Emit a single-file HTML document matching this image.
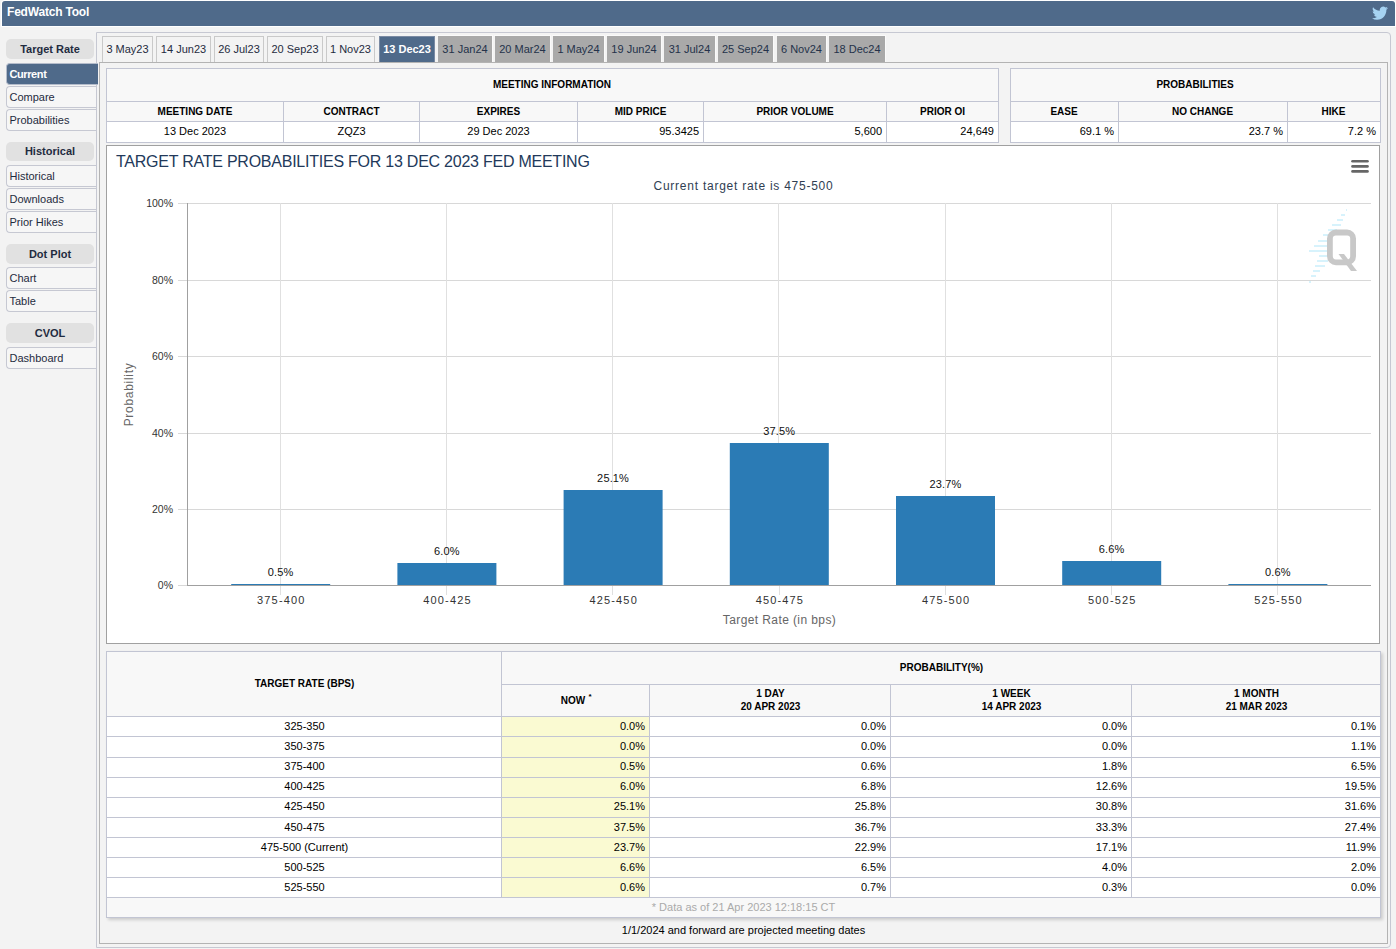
<!DOCTYPE html>
<html><head><meta charset="utf-8"><style>
html,body{margin:0;padding:0;}
body{width:1396px;height:949px;position:relative;overflow:hidden;background:#f3f3f3;font-family:"Liberation Sans", sans-serif;}
body>div,body>svg{position:absolute;box-sizing:content-box;}
svg text{font-family:"Liberation Sans", sans-serif;}
</style></head><body>
<div style="left:1px;top:0px;width:1395px;height:27px;background:#fff;border-radius:4px 4px 0 0;"></div>
<div style="left:2px;top:1px;width:1393px;height:25px;background:#4f6a8a;border-radius:3px 3px 0 0;"></div>
<div style="left:7px;top:5.84px;font-size:12px;line-height:12px;font-weight:bold;color:#fff;white-space:nowrap;letter-spacing:-0.2px;">FedWatch Tool</div>
<svg style="left:1372px;top:6px;width:16px;height:14px" viewBox="0 1.5 24 20.5" preserveAspectRatio="none"><path fill="#a6d3f2" d="M23.953 4.57a10 10 0 01-2.825.775 4.958 4.958 0 002.163-2.723c-.951.555-2.005.959-3.127 1.184a4.92 4.92 0 00-8.384 4.482C7.69 8.095 4.067 6.13 1.64 3.162a4.822 4.822 0 00-.666 2.475c0 1.71.87 3.213 2.188 4.096a4.904 4.904 0 01-2.228-.616v.06a4.923 4.923 0 003.946 4.827 4.996 4.996 0 01-2.212.085 4.936 4.936 0 004.604 3.417 9.867 9.867 0 01-6.102 2.105c-.39 0-.779-.023-1.17-.067a13.995 13.995 0 007.557 2.209c9.053 0 13.998-7.496 13.998-13.985 0-.21 0-.42-.015-.63A9.935 9.935 0 0024 4.59z"/></svg>
<div style="left:6px;top:39px;width:88px;height:20px;background:#e1e1e1;border-radius:5px;"></div>
<div style="left:6.0px;width:88px;text-align:center;top:43.69px;font-size:11px;line-height:11px;font-weight:bold;color:#1f2b40;white-space:nowrap;">Target Rate</div>
<div style="left:6px;top:63px;width:91px;height:20px;background:#4f6a8a;border:1px solid #b4bccb;border-right:none;border-radius:4px 0 0 4px;z-index:2;"></div>
<div style="left:9.5px;top:68.69px;font-size:11px;line-height:11px;font-weight:bold;color:#fff;white-space:nowrap;letter-spacing:-0.4px;z-index:3;">Current</div>
<div style="left:6px;top:86px;width:90px;height:20px;background:#f6f6f6;border:1px solid #c6c8d2;border-right:none;border-radius:4px 0 0 4px;"></div>
<div style="left:9.5px;top:91.69px;font-size:11px;line-height:11px;font-weight:normal;color:#1f2b40;white-space:nowrap;">Compare</div>
<div style="left:6px;top:109px;width:90px;height:20px;background:#f6f6f6;border:1px solid #c6c8d2;border-right:none;border-radius:4px 0 0 4px;"></div>
<div style="left:9.5px;top:114.69px;font-size:11px;line-height:11px;font-weight:normal;color:#1f2b40;white-space:nowrap;">Probabilities</div>
<div style="left:6px;top:142px;width:88px;height:19px;background:#e1e1e1;border-radius:5px;"></div>
<div style="left:6.0px;width:88px;text-align:center;top:145.69px;font-size:11px;line-height:11px;font-weight:bold;color:#1f2b40;white-space:nowrap;">Historical</div>
<div style="left:6px;top:165px;width:90px;height:20px;background:#f6f6f6;border:1px solid #c6c8d2;border-right:none;border-radius:4px 0 0 4px;"></div>
<div style="left:9.5px;top:170.69px;font-size:11px;line-height:11px;font-weight:normal;color:#1f2b40;white-space:nowrap;">Historical</div>
<div style="left:6px;top:188px;width:90px;height:20px;background:#f6f6f6;border:1px solid #c6c8d2;border-right:none;border-radius:4px 0 0 4px;"></div>
<div style="left:9.5px;top:193.69px;font-size:11px;line-height:11px;font-weight:normal;color:#1f2b40;white-space:nowrap;">Downloads</div>
<div style="left:6px;top:211px;width:90px;height:20px;background:#f6f6f6;border:1px solid #c6c8d2;border-right:none;border-radius:4px 0 0 4px;"></div>
<div style="left:9.5px;top:216.69px;font-size:11px;line-height:11px;font-weight:normal;color:#1f2b40;white-space:nowrap;">Prior Hikes</div>
<div style="left:6px;top:244px;width:88px;height:20px;background:#e1e1e1;border-radius:5px;"></div>
<div style="left:6.0px;width:88px;text-align:center;top:248.69px;font-size:11px;line-height:11px;font-weight:bold;color:#1f2b40;white-space:nowrap;">Dot Plot</div>
<div style="left:6px;top:267px;width:90px;height:20px;background:#f6f6f6;border:1px solid #c6c8d2;border-right:none;border-radius:4px 0 0 4px;"></div>
<div style="left:9.5px;top:272.69px;font-size:11px;line-height:11px;font-weight:normal;color:#1f2b40;white-space:nowrap;">Chart</div>
<div style="left:6px;top:290px;width:90px;height:20px;background:#f6f6f6;border:1px solid #c6c8d2;border-right:none;border-radius:4px 0 0 4px;"></div>
<div style="left:9.5px;top:295.69px;font-size:11px;line-height:11px;font-weight:normal;color:#1f2b40;white-space:nowrap;">Table</div>
<div style="left:6px;top:323px;width:88px;height:20px;background:#e1e1e1;border-radius:5px;"></div>
<div style="left:6.0px;width:88px;text-align:center;top:327.69px;font-size:11px;line-height:11px;font-weight:bold;color:#1f2b40;white-space:nowrap;">CVOL</div>
<div style="left:6px;top:347px;width:90px;height:20px;background:#f6f6f6;border:1px solid #c6c8d2;border-right:none;border-radius:4px 0 0 4px;"></div>
<div style="left:9.5px;top:352.69px;font-size:11px;line-height:11px;font-weight:normal;color:#1f2b40;white-space:nowrap;">Dashboard</div>
<div style="left:96px;top:32px;width:1293px;height:914px;background:#f3f3f3;border:1px solid #c6c8d2;border-radius:0 4px 4px 0;"></div>
<div style="left:102px;top:36px;width:49px;height:26px;background:#f3f3f3;border:1px solid #c9c9c9;border-bottom:none;"></div>
<div style="left:102.0px;width:51px;text-align:center;top:43.69px;font-size:11px;line-height:11px;font-weight:normal;color:#1f2b40;white-space:nowrap;">3 May23</div>
<div style="left:156px;top:36px;width:53px;height:26px;background:#f3f3f3;border:1px solid #c9c9c9;border-bottom:none;"></div>
<div style="left:156.0px;width:55px;text-align:center;top:43.69px;font-size:11px;line-height:11px;font-weight:normal;color:#1f2b40;white-space:nowrap;">14 Jun23</div>
<div style="left:214px;top:36px;width:48px;height:26px;background:#f3f3f3;border:1px solid #c9c9c9;border-bottom:none;"></div>
<div style="left:214.0px;width:50px;text-align:center;top:43.69px;font-size:11px;line-height:11px;font-weight:normal;color:#1f2b40;white-space:nowrap;">26 Jul23</div>
<div style="left:267px;top:36px;width:54px;height:26px;background:#f3f3f3;border:1px solid #c9c9c9;border-bottom:none;"></div>
<div style="left:267.0px;width:56px;text-align:center;top:43.69px;font-size:11px;line-height:11px;font-weight:normal;color:#1f2b40;white-space:nowrap;">20 Sep23</div>
<div style="left:326px;top:36px;width:47px;height:26px;background:#f3f3f3;border:1px solid #c9c9c9;border-bottom:none;"></div>
<div style="left:326.0px;width:49px;text-align:center;top:43.69px;font-size:11px;line-height:11px;font-weight:normal;color:#1f2b40;white-space:nowrap;">1 Nov23</div>
<div style="left:379px;top:36px;width:54px;height:25px;background:#4f6a8a;border:1px solid #7a8aa3;border-bottom:none;"></div>
<div style="left:379.0px;width:56px;text-align:center;top:43.69px;font-size:11px;line-height:11px;font-weight:bold;color:#fff;white-space:nowrap;">13 Dec23</div>
<div style="left:437px;top:35px;width:55px;height:1px;background:#fafafa;"></div>
<div style="left:492px;top:35px;width:1px;height:27px;background:#fafafa;"></div>
<div style="left:438px;top:36px;width:54px;height:26px;background:#a9a9a9;"></div>
<div style="left:438.0px;width:54px;text-align:center;top:43.69px;font-size:11px;line-height:11px;font-weight:normal;color:#24324a;white-space:nowrap;">31 Jan24</div>
<div style="left:494px;top:35px;width:56px;height:1px;background:#fafafa;"></div>
<div style="left:550px;top:35px;width:1px;height:27px;background:#fafafa;"></div>
<div style="left:495px;top:36px;width:55px;height:26px;background:#a9a9a9;"></div>
<div style="left:495.0px;width:55px;text-align:center;top:43.69px;font-size:11px;line-height:11px;font-weight:normal;color:#24324a;white-space:nowrap;">20 Mar24</div>
<div style="left:552px;top:35px;width:52px;height:1px;background:#fafafa;"></div>
<div style="left:604px;top:35px;width:1px;height:27px;background:#fafafa;"></div>
<div style="left:553px;top:36px;width:51px;height:26px;background:#a9a9a9;"></div>
<div style="left:553.0px;width:51px;text-align:center;top:43.69px;font-size:11px;line-height:11px;font-weight:normal;color:#24324a;white-space:nowrap;">1 May24</div>
<div style="left:606px;top:35px;width:55px;height:1px;background:#fafafa;"></div>
<div style="left:661px;top:35px;width:1px;height:27px;background:#fafafa;"></div>
<div style="left:607px;top:36px;width:54px;height:26px;background:#a9a9a9;"></div>
<div style="left:607.0px;width:54px;text-align:center;top:43.69px;font-size:11px;line-height:11px;font-weight:normal;color:#24324a;white-space:nowrap;">19 Jun24</div>
<div style="left:663px;top:35px;width:52px;height:1px;background:#fafafa;"></div>
<div style="left:715px;top:35px;width:1px;height:27px;background:#fafafa;"></div>
<div style="left:664px;top:36px;width:51px;height:26px;background:#a9a9a9;"></div>
<div style="left:664.0px;width:51px;text-align:center;top:43.69px;font-size:11px;line-height:11px;font-weight:normal;color:#24324a;white-space:nowrap;">31 Jul24</div>
<div style="left:717px;top:35px;width:56px;height:1px;background:#fafafa;"></div>
<div style="left:773px;top:35px;width:1px;height:27px;background:#fafafa;"></div>
<div style="left:718px;top:36px;width:55px;height:26px;background:#a9a9a9;"></div>
<div style="left:718.0px;width:55px;text-align:center;top:43.69px;font-size:11px;line-height:11px;font-weight:normal;color:#24324a;white-space:nowrap;">25 Sep24</div>
<div style="left:776px;top:35px;width:50px;height:1px;background:#fafafa;"></div>
<div style="left:826px;top:35px;width:1px;height:27px;background:#fafafa;"></div>
<div style="left:777px;top:36px;width:49px;height:26px;background:#a9a9a9;"></div>
<div style="left:777.0px;width:49px;text-align:center;top:43.69px;font-size:11px;line-height:11px;font-weight:normal;color:#24324a;white-space:nowrap;">6 Nov24</div>
<div style="left:828px;top:35px;width:57px;height:1px;background:#fafafa;"></div>
<div style="left:885px;top:35px;width:1px;height:27px;background:#fafafa;"></div>
<div style="left:829px;top:36px;width:56px;height:26px;background:#a9a9a9;"></div>
<div style="left:829.0px;width:56px;text-align:center;top:43.69px;font-size:11px;line-height:11px;font-weight:normal;color:#24324a;white-space:nowrap;">18 Dec24</div>
<div style="left:99px;top:62px;width:1287px;height:880px;background:#f3f3f3;border:1px solid #b3b3b3;"></div>
<div style="left:106px;top:68px;width:893px;height:75px;background:#f8f8f8;"></div>
<div style="left:106px;top:121px;width:893px;height:22px;background:#fff;"></div>
<div style="left:106px;top:68px;width:893px;height:1px;background:#c2c5d3;"></div>
<div style="left:106px;top:101px;width:893px;height:1px;background:#c2c5d3;"></div>
<div style="left:106px;top:121px;width:893px;height:1px;background:#c2c5d3;"></div>
<div style="left:106px;top:142px;width:893px;height:1px;background:#c2c5d3;"></div>
<div style="left:106px;top:68px;width:1px;height:75px;background:#c2c5d3;"></div>
<div style="left:998px;top:68px;width:1px;height:75px;background:#c2c5d3;"></div>
<div style="left:283px;top:101px;width:1px;height:42px;background:#c2c5d3;"></div>
<div style="left:419px;top:101px;width:1px;height:42px;background:#c2c5d3;"></div>
<div style="left:577px;top:101px;width:1px;height:42px;background:#c2c5d3;"></div>
<div style="left:703px;top:101px;width:1px;height:42px;background:#c2c5d3;"></div>
<div style="left:886px;top:101px;width:1px;height:42px;background:#c2c5d3;"></div>
<div style="left:352.0px;width:400px;text-align:center;top:79.53px;font-size:10px;line-height:10px;font-weight:bold;color:#000;white-space:nowrap;">MEETING INFORMATION</div>
<div style="left:45.0px;width:300px;text-align:center;top:106.53px;font-size:10px;line-height:10px;font-weight:bold;color:#000;white-space:nowrap;">MEETING DATE</div>
<div style="left:45.0px;width:300px;text-align:center;top:125.69px;font-size:11px;line-height:11px;font-weight:normal;color:#000;white-space:nowrap;">13 Dec 2023</div>
<div style="left:201.5px;width:300px;text-align:center;top:106.53px;font-size:10px;line-height:10px;font-weight:bold;color:#000;white-space:nowrap;">CONTRACT</div>
<div style="left:201.5px;width:300px;text-align:center;top:125.69px;font-size:11px;line-height:11px;font-weight:normal;color:#000;white-space:nowrap;">ZQZ3</div>
<div style="left:348.5px;width:300px;text-align:center;top:106.53px;font-size:10px;line-height:10px;font-weight:bold;color:#000;white-space:nowrap;">EXPIRES</div>
<div style="left:348.5px;width:300px;text-align:center;top:125.69px;font-size:11px;line-height:11px;font-weight:normal;color:#000;white-space:nowrap;">29 Dec 2023</div>
<div style="left:490.5px;width:300px;text-align:center;top:106.53px;font-size:10px;line-height:10px;font-weight:bold;color:#000;white-space:nowrap;">MID PRICE</div>
<div style="left:399px;width:300px;text-align:right;top:125.69px;font-size:11px;line-height:11px;font-weight:normal;color:#000;white-space:nowrap;">95.3425</div>
<div style="left:645.0px;width:300px;text-align:center;top:106.53px;font-size:10px;line-height:10px;font-weight:bold;color:#000;white-space:nowrap;">PRIOR VOLUME</div>
<div style="left:582px;width:300px;text-align:right;top:125.69px;font-size:11px;line-height:11px;font-weight:normal;color:#000;white-space:nowrap;">5,600</div>
<div style="left:792.5px;width:300px;text-align:center;top:106.53px;font-size:10px;line-height:10px;font-weight:bold;color:#000;white-space:nowrap;">PRIOR OI</div>
<div style="left:694px;width:300px;text-align:right;top:125.69px;font-size:11px;line-height:11px;font-weight:normal;color:#000;white-space:nowrap;">24,649</div>
<div style="left:1010px;top:68px;width:371px;height:75px;background:#f8f8f8;"></div>
<div style="left:1010px;top:121px;width:371px;height:22px;background:#fff;"></div>
<div style="left:1010px;top:68px;width:371px;height:1px;background:#c2c5d3;"></div>
<div style="left:1010px;top:101px;width:371px;height:1px;background:#c2c5d3;"></div>
<div style="left:1010px;top:121px;width:371px;height:1px;background:#c2c5d3;"></div>
<div style="left:1010px;top:142px;width:371px;height:1px;background:#c2c5d3;"></div>
<div style="left:1010px;top:68px;width:1px;height:75px;background:#c2c5d3;"></div>
<div style="left:1380px;top:68px;width:1px;height:75px;background:#c2c5d3;"></div>
<div style="left:1118px;top:101px;width:1px;height:42px;background:#c2c5d3;"></div>
<div style="left:1287px;top:101px;width:1px;height:42px;background:#c2c5d3;"></div>
<div style="left:1045.0px;width:300px;text-align:center;top:79.53px;font-size:10px;line-height:10px;font-weight:bold;color:#000;white-space:nowrap;">PROBABILITIES</div>
<div style="left:914.0px;width:300px;text-align:center;top:106.53px;font-size:10px;line-height:10px;font-weight:bold;color:#000;white-space:nowrap;">EASE</div>
<div style="left:814px;width:300px;text-align:right;top:125.69px;font-size:11px;line-height:11px;font-weight:normal;color:#000;white-space:nowrap;">69.1 %</div>
<div style="left:1052.5px;width:300px;text-align:center;top:106.53px;font-size:10px;line-height:10px;font-weight:bold;color:#000;white-space:nowrap;">NO CHANGE</div>
<div style="left:983px;width:300px;text-align:right;top:125.69px;font-size:11px;line-height:11px;font-weight:normal;color:#000;white-space:nowrap;">23.7 %</div>
<div style="left:1183.5px;width:300px;text-align:center;top:106.53px;font-size:10px;line-height:10px;font-weight:bold;color:#000;white-space:nowrap;">HIKE</div>
<div style="left:1076px;width:300px;text-align:right;top:125.69px;font-size:11px;line-height:11px;font-weight:normal;color:#000;white-space:nowrap;">7.2 %</div>
<div style="left:106px;top:145px;width:1272px;height:497px;background:#fff;border:1px solid #a0a0a0;"></div>
<div style="left:106px;top:651px;width:1275px;height:267px;background:#f8f8f8;box-shadow:2px 2px 3px rgba(0,0,0,0.16);"></div>
<div style="left:106px;top:716px;width:1275px;height:181px;background:#fff;"></div>
<div style="left:502px;top:717px;width:147px;height:180px;background:#fafad2;"></div>
<div style="left:106px;top:651px;width:1275px;height:1px;background:#c2c5d3;"></div>
<div style="left:501px;top:684px;width:880px;height:1px;background:#c2c5d3;"></div>
<div style="left:106px;top:716px;width:1275px;height:1px;background:#c2c5d3;"></div>
<div style="left:106px;top:736px;width:1275px;height:1px;background:#c2c5d3;"></div>
<div style="left:106px;top:757px;width:1275px;height:1px;background:#c2c5d3;"></div>
<div style="left:106px;top:777px;width:1275px;height:1px;background:#c2c5d3;"></div>
<div style="left:106px;top:797px;width:1275px;height:1px;background:#c2c5d3;"></div>
<div style="left:106px;top:817px;width:1275px;height:1px;background:#c2c5d3;"></div>
<div style="left:106px;top:837px;width:1275px;height:1px;background:#c2c5d3;"></div>
<div style="left:106px;top:857px;width:1275px;height:1px;background:#c2c5d3;"></div>
<div style="left:106px;top:877px;width:1275px;height:1px;background:#c2c5d3;"></div>
<div style="left:106px;top:897px;width:1275px;height:1px;background:#c2c5d3;"></div>
<div style="left:106px;top:917px;width:1275px;height:1px;background:#c2c5d3;"></div>
<div style="left:106px;top:651px;width:1px;height:267px;background:#c2c5d3;"></div>
<div style="left:1380px;top:651px;width:1px;height:267px;background:#c2c5d3;"></div>
<div style="left:501px;top:651px;width:1px;height:247px;background:#c2c5d3;"></div>
<div style="left:649px;top:684px;width:1px;height:214px;background:#c2c5d3;"></div>
<div style="left:890px;top:684px;width:1px;height:214px;background:#c2c5d3;"></div>
<div style="left:1131px;top:684px;width:1px;height:214px;background:#c2c5d3;"></div>
<div style="left:154.5px;width:300px;text-align:center;top:679.03px;font-size:10px;line-height:10px;font-weight:bold;color:#000;white-space:nowrap;">TARGET RATE (BPS)</div>
<div style="left:791.5px;width:300px;text-align:center;top:662.53px;font-size:10px;line-height:10px;font-weight:bold;color:#000;white-space:nowrap;">PROBABILITY(%)</div>
<div style="left:503.0px;width:140px;text-align:center;top:695.53px;font-size:10px;line-height:10px;font-weight:bold;color:#000;white-space:nowrap;">NOW</div>
<div style="left:588.5px;top:693.23px;font-size:8px;line-height:8px;font-weight:bold;color:#000;white-space:nowrap;">*</div>
<div style="left:670.5px;width:200px;text-align:center;top:688.53px;font-size:10px;line-height:10px;font-weight:bold;color:#000;white-space:nowrap;">1 DAY</div>
<div style="left:670.5px;width:200px;text-align:center;top:701.53px;font-size:10px;line-height:10px;font-weight:bold;color:#000;white-space:nowrap;">20 APR 2023</div>
<div style="left:911.5px;width:200px;text-align:center;top:688.53px;font-size:10px;line-height:10px;font-weight:bold;color:#000;white-space:nowrap;">1 WEEK</div>
<div style="left:911.5px;width:200px;text-align:center;top:701.53px;font-size:10px;line-height:10px;font-weight:bold;color:#000;white-space:nowrap;">14 APR 2023</div>
<div style="left:1156.5px;width:200px;text-align:center;top:688.53px;font-size:10px;line-height:10px;font-weight:bold;color:#000;white-space:nowrap;">1 MONTH</div>
<div style="left:1156.5px;width:200px;text-align:center;top:701.53px;font-size:10px;line-height:10px;font-weight:bold;color:#000;white-space:nowrap;">21 MAR 2023</div>
<div style="left:154.5px;width:300px;text-align:center;top:720.69px;font-size:11px;line-height:11px;font-weight:normal;color:#000;white-space:nowrap;">325-350</div>
<div style="left:445px;width:200px;text-align:right;top:720.69px;font-size:11px;line-height:11px;font-weight:normal;color:#000;white-space:nowrap;">0.0%</div>
<div style="left:686px;width:200px;text-align:right;top:720.69px;font-size:11px;line-height:11px;font-weight:normal;color:#000;white-space:nowrap;">0.0%</div>
<div style="left:927px;width:200px;text-align:right;top:720.69px;font-size:11px;line-height:11px;font-weight:normal;color:#000;white-space:nowrap;">0.0%</div>
<div style="left:1176px;width:200px;text-align:right;top:720.69px;font-size:11px;line-height:11px;font-weight:normal;color:#000;white-space:nowrap;">0.1%</div>
<div style="left:154.5px;width:300px;text-align:center;top:740.69px;font-size:11px;line-height:11px;font-weight:normal;color:#000;white-space:nowrap;">350-375</div>
<div style="left:445px;width:200px;text-align:right;top:740.69px;font-size:11px;line-height:11px;font-weight:normal;color:#000;white-space:nowrap;">0.0%</div>
<div style="left:686px;width:200px;text-align:right;top:740.69px;font-size:11px;line-height:11px;font-weight:normal;color:#000;white-space:nowrap;">0.0%</div>
<div style="left:927px;width:200px;text-align:right;top:740.69px;font-size:11px;line-height:11px;font-weight:normal;color:#000;white-space:nowrap;">0.0%</div>
<div style="left:1176px;width:200px;text-align:right;top:740.69px;font-size:11px;line-height:11px;font-weight:normal;color:#000;white-space:nowrap;">1.1%</div>
<div style="left:154.5px;width:300px;text-align:center;top:760.69px;font-size:11px;line-height:11px;font-weight:normal;color:#000;white-space:nowrap;">375-400</div>
<div style="left:445px;width:200px;text-align:right;top:760.69px;font-size:11px;line-height:11px;font-weight:normal;color:#000;white-space:nowrap;">0.5%</div>
<div style="left:686px;width:200px;text-align:right;top:760.69px;font-size:11px;line-height:11px;font-weight:normal;color:#000;white-space:nowrap;">0.6%</div>
<div style="left:927px;width:200px;text-align:right;top:760.69px;font-size:11px;line-height:11px;font-weight:normal;color:#000;white-space:nowrap;">1.8%</div>
<div style="left:1176px;width:200px;text-align:right;top:760.69px;font-size:11px;line-height:11px;font-weight:normal;color:#000;white-space:nowrap;">6.5%</div>
<div style="left:154.5px;width:300px;text-align:center;top:780.69px;font-size:11px;line-height:11px;font-weight:normal;color:#000;white-space:nowrap;">400-425</div>
<div style="left:445px;width:200px;text-align:right;top:780.69px;font-size:11px;line-height:11px;font-weight:normal;color:#000;white-space:nowrap;">6.0%</div>
<div style="left:686px;width:200px;text-align:right;top:780.69px;font-size:11px;line-height:11px;font-weight:normal;color:#000;white-space:nowrap;">6.8%</div>
<div style="left:927px;width:200px;text-align:right;top:780.69px;font-size:11px;line-height:11px;font-weight:normal;color:#000;white-space:nowrap;">12.6%</div>
<div style="left:1176px;width:200px;text-align:right;top:780.69px;font-size:11px;line-height:11px;font-weight:normal;color:#000;white-space:nowrap;">19.5%</div>
<div style="left:154.5px;width:300px;text-align:center;top:800.69px;font-size:11px;line-height:11px;font-weight:normal;color:#000;white-space:nowrap;">425-450</div>
<div style="left:445px;width:200px;text-align:right;top:800.69px;font-size:11px;line-height:11px;font-weight:normal;color:#000;white-space:nowrap;">25.1%</div>
<div style="left:686px;width:200px;text-align:right;top:800.69px;font-size:11px;line-height:11px;font-weight:normal;color:#000;white-space:nowrap;">25.8%</div>
<div style="left:927px;width:200px;text-align:right;top:800.69px;font-size:11px;line-height:11px;font-weight:normal;color:#000;white-space:nowrap;">30.8%</div>
<div style="left:1176px;width:200px;text-align:right;top:800.69px;font-size:11px;line-height:11px;font-weight:normal;color:#000;white-space:nowrap;">31.6%</div>
<div style="left:154.5px;width:300px;text-align:center;top:821.69px;font-size:11px;line-height:11px;font-weight:normal;color:#000;white-space:nowrap;">450-475</div>
<div style="left:445px;width:200px;text-align:right;top:821.69px;font-size:11px;line-height:11px;font-weight:normal;color:#000;white-space:nowrap;">37.5%</div>
<div style="left:686px;width:200px;text-align:right;top:821.69px;font-size:11px;line-height:11px;font-weight:normal;color:#000;white-space:nowrap;">36.7%</div>
<div style="left:927px;width:200px;text-align:right;top:821.69px;font-size:11px;line-height:11px;font-weight:normal;color:#000;white-space:nowrap;">33.3%</div>
<div style="left:1176px;width:200px;text-align:right;top:821.69px;font-size:11px;line-height:11px;font-weight:normal;color:#000;white-space:nowrap;">27.4%</div>
<div style="left:154.5px;width:300px;text-align:center;top:841.69px;font-size:11px;line-height:11px;font-weight:normal;color:#000;white-space:nowrap;">475-500 (Current)</div>
<div style="left:445px;width:200px;text-align:right;top:841.69px;font-size:11px;line-height:11px;font-weight:normal;color:#000;white-space:nowrap;">23.7%</div>
<div style="left:686px;width:200px;text-align:right;top:841.69px;font-size:11px;line-height:11px;font-weight:normal;color:#000;white-space:nowrap;">22.9%</div>
<div style="left:927px;width:200px;text-align:right;top:841.69px;font-size:11px;line-height:11px;font-weight:normal;color:#000;white-space:nowrap;">17.1%</div>
<div style="left:1176px;width:200px;text-align:right;top:841.69px;font-size:11px;line-height:11px;font-weight:normal;color:#000;white-space:nowrap;">11.9%</div>
<div style="left:154.5px;width:300px;text-align:center;top:861.69px;font-size:11px;line-height:11px;font-weight:normal;color:#000;white-space:nowrap;">500-525</div>
<div style="left:445px;width:200px;text-align:right;top:861.69px;font-size:11px;line-height:11px;font-weight:normal;color:#000;white-space:nowrap;">6.6%</div>
<div style="left:686px;width:200px;text-align:right;top:861.69px;font-size:11px;line-height:11px;font-weight:normal;color:#000;white-space:nowrap;">6.5%</div>
<div style="left:927px;width:200px;text-align:right;top:861.69px;font-size:11px;line-height:11px;font-weight:normal;color:#000;white-space:nowrap;">4.0%</div>
<div style="left:1176px;width:200px;text-align:right;top:861.69px;font-size:11px;line-height:11px;font-weight:normal;color:#000;white-space:nowrap;">2.0%</div>
<div style="left:154.5px;width:300px;text-align:center;top:881.69px;font-size:11px;line-height:11px;font-weight:normal;color:#000;white-space:nowrap;">525-550</div>
<div style="left:445px;width:200px;text-align:right;top:881.69px;font-size:11px;line-height:11px;font-weight:normal;color:#000;white-space:nowrap;">0.6%</div>
<div style="left:686px;width:200px;text-align:right;top:881.69px;font-size:11px;line-height:11px;font-weight:normal;color:#000;white-space:nowrap;">0.7%</div>
<div style="left:927px;width:200px;text-align:right;top:881.69px;font-size:11px;line-height:11px;font-weight:normal;color:#000;white-space:nowrap;">0.3%</div>
<div style="left:1176px;width:200px;text-align:right;top:881.69px;font-size:11px;line-height:11px;font-weight:normal;color:#000;white-space:nowrap;">0.0%</div>
<div style="left:543.5px;width:400px;text-align:center;top:901.69px;font-size:11px;line-height:11px;font-weight:normal;color:#aaa;white-space:nowrap;">* Data as of 21 Apr 2023 12:18:15 CT</div>
<div style="left:543.5px;width:400px;text-align:center;top:924.69px;font-size:11px;line-height:11px;font-weight:normal;color:#000;white-space:nowrap;">1/1/2024 and forward are projected meeting dates</div>
<svg style="left:0;top:0;width:1396px;height:949px" viewBox="0 0 1396 949">
<line x1="178" x2="1371" y1="585.5" y2="585.5" stroke="#d8d8d8" stroke-width="1"/>
<text x="173" y="588.8" text-anchor="end" font-size="10.5" fill="#333">0%</text>
<line x1="178" x2="1371" y1="509.5" y2="509.5" stroke="#d8d8d8" stroke-width="1"/>
<text x="173" y="512.8" text-anchor="end" font-size="10.5" fill="#333">20%</text>
<line x1="178" x2="1371" y1="433.5" y2="433.5" stroke="#d8d8d8" stroke-width="1"/>
<text x="173" y="436.8" text-anchor="end" font-size="10.5" fill="#333">40%</text>
<line x1="178" x2="1371" y1="356.5" y2="356.5" stroke="#d8d8d8" stroke-width="1"/>
<text x="173" y="359.8" text-anchor="end" font-size="10.5" fill="#333">60%</text>
<line x1="178" x2="1371" y1="280.5" y2="280.5" stroke="#d8d8d8" stroke-width="1"/>
<text x="173" y="283.8" text-anchor="end" font-size="10.5" fill="#333">80%</text>
<line x1="178" x2="1371" y1="203.5" y2="203.5" stroke="#d8d8d8" stroke-width="1"/>
<text x="173" y="206.8" text-anchor="end" font-size="10.5" fill="#333">100%</text>
<line x1="280.5" x2="280.5" y1="203" y2="585" stroke="#e0e0e0" stroke-width="1"/>
<line x1="280.5" x2="280.5" y1="585" y2="595" stroke="#e0e0e0" stroke-width="1"/>
<line x1="446.5" x2="446.5" y1="203" y2="585" stroke="#e0e0e0" stroke-width="1"/>
<line x1="446.5" x2="446.5" y1="585" y2="595" stroke="#e0e0e0" stroke-width="1"/>
<line x1="612.5" x2="612.5" y1="203" y2="585" stroke="#e0e0e0" stroke-width="1"/>
<line x1="612.5" x2="612.5" y1="585" y2="595" stroke="#e0e0e0" stroke-width="1"/>
<line x1="778.5" x2="778.5" y1="203" y2="585" stroke="#e0e0e0" stroke-width="1"/>
<line x1="779.5" x2="779.5" y1="585" y2="595" stroke="#e0e0e0" stroke-width="1"/>
<line x1="945.5" x2="945.5" y1="203" y2="585" stroke="#e0e0e0" stroke-width="1"/>
<line x1="945.5" x2="945.5" y1="585" y2="595" stroke="#e0e0e0" stroke-width="1"/>
<line x1="1111.5" x2="1111.5" y1="203" y2="585" stroke="#e0e0e0" stroke-width="1"/>
<line x1="1111.5" x2="1111.5" y1="585" y2="595" stroke="#e0e0e0" stroke-width="1"/>
<line x1="1277.5" x2="1277.5" y1="203" y2="585" stroke="#e0e0e0" stroke-width="1"/>
<line x1="1277.5" x2="1277.5" y1="585" y2="595" stroke="#e0e0e0" stroke-width="1"/>
<rect x="231.20" y="584" width="99" height="1" fill="#2b7bb5"/>
<text x="280.70" y="576" text-anchor="middle" font-size="11" fill="#111" letter-spacing="0.15">0.5%</text>
<text x="281.30" y="604" text-anchor="middle" font-size="11" fill="#333" letter-spacing="1.15">375-400</text>
<rect x="397.40" y="563" width="99" height="22" fill="#2b7bb5"/>
<text x="446.90" y="555" text-anchor="middle" font-size="11" fill="#111" letter-spacing="0.15">6.0%</text>
<text x="447.50" y="604" text-anchor="middle" font-size="11" fill="#333" letter-spacing="1.15">400-425</text>
<rect x="563.60" y="490" width="99" height="95" fill="#2b7bb5"/>
<text x="613.10" y="482" text-anchor="middle" font-size="11" fill="#111" letter-spacing="0.15">25.1%</text>
<text x="613.70" y="604" text-anchor="middle" font-size="11" fill="#333" letter-spacing="1.15">425-450</text>
<rect x="729.80" y="443" width="99" height="142" fill="#2b7bb5"/>
<text x="779.30" y="435" text-anchor="middle" font-size="11" fill="#111" letter-spacing="0.15">37.5%</text>
<text x="779.90" y="604" text-anchor="middle" font-size="11" fill="#333" letter-spacing="1.15">450-475</text>
<rect x="896.00" y="496" width="99" height="89" fill="#2b7bb5"/>
<text x="945.50" y="488" text-anchor="middle" font-size="11" fill="#111" letter-spacing="0.15">23.7%</text>
<text x="946.10" y="604" text-anchor="middle" font-size="11" fill="#333" letter-spacing="1.15">475-500</text>
<rect x="1062.20" y="561" width="99" height="24" fill="#2b7bb5"/>
<text x="1111.70" y="553" text-anchor="middle" font-size="11" fill="#111" letter-spacing="0.15">6.6%</text>
<text x="1112.30" y="604" text-anchor="middle" font-size="11" fill="#333" letter-spacing="1.15">500-525</text>
<rect x="1228.40" y="584" width="99" height="1" fill="#2b7bb5"/>
<text x="1277.90" y="576" text-anchor="middle" font-size="11" fill="#111" letter-spacing="0.15">0.6%</text>
<text x="1278.50" y="604" text-anchor="middle" font-size="11" fill="#333" letter-spacing="1.15">525-550</text>
<line x1="187.5" x2="187.5" y1="203" y2="585" stroke="#a0a0a0" stroke-width="1"/>
<line x1="187" x2="1371" y1="585.5" y2="585.5" stroke="#a0a0a0" stroke-width="1"/>
<text x="116" y="167" font-size="16" fill="#22395a" letter-spacing="-0.24">TARGET RATE PROBABILITIES FOR 13 DEC 2023 FED MEETING</text>
<text x="743.5" y="190" text-anchor="middle" font-size="12" fill="#2f3e52" letter-spacing="0.75">Current target rate is 475-500</text>
<text x="779.5" y="624" text-anchor="middle" font-size="12" fill="#666" letter-spacing="0.4">Target Rate (in bps)</text>
<text transform="translate(133,394.5) rotate(-90)" text-anchor="middle" font-size="12" fill="#666" letter-spacing="0.7">Probability</text>
<line x1="1352.5" x2="1367.5" y1="161.2" y2="161.2" stroke="#666" stroke-width="2.6" stroke-linecap="round"/>
<line x1="1352.5" x2="1367.5" y1="166.4" y2="166.4" stroke="#666" stroke-width="2.6" stroke-linecap="round"/>
<line x1="1352.5" x2="1367.5" y1="171.4" y2="171.4" stroke="#666" stroke-width="2.6" stroke-linecap="round"/>
<line x1="1346" x2="1347" y1="210" y2="210" stroke="#a6e3f8" stroke-width="0.9"/>
<line x1="1341" x2="1345" y1="215" y2="215" stroke="#a6e3f8" stroke-width="0.9"/>
<line x1="1337" x2="1343" y1="220" y2="220" stroke="#a6e3f8" stroke-width="0.9"/>
<line x1="1332" x2="1341" y1="225" y2="225" stroke="#a6e3f8" stroke-width="0.9"/>
<line x1="1328" x2="1337" y1="230" y2="230" stroke="#a6e3f8" stroke-width="0.9"/>
<line x1="1323" x2="1328" y1="235" y2="235" stroke="#a6e3f8" stroke-width="0.9"/>
<line x1="1318" x2="1328" y1="241" y2="241" stroke="#a6e3f8" stroke-width="0.9"/>
<line x1="1314" x2="1328" y1="246" y2="246" stroke="#a6e3f8" stroke-width="0.9"/>
<line x1="1309" x2="1328" y1="251" y2="251" stroke="#a6e3f8" stroke-width="0.9"/>
<line x1="1319" x2="1328" y1="256" y2="256" stroke="#a6e3f8" stroke-width="0.9"/>
<line x1="1317" x2="1328" y1="261" y2="261" stroke="#a6e3f8" stroke-width="0.9"/>
<line x1="1315" x2="1325" y1="266" y2="266" stroke="#a6e3f8" stroke-width="0.9"/>
<line x1="1313" x2="1320" y1="271" y2="271" stroke="#a6e3f8" stroke-width="0.9"/>
<line x1="1311" x2="1316" y1="276" y2="276" stroke="#a6e3f8" stroke-width="0.9"/>
<line x1="1309" x2="1311" y1="282" y2="282" stroke="#a6e3f8" stroke-width="0.9"/>
<rect x="1329.9" y="232.5" width="23.2" height="29.8" rx="6" ry="6" fill="none" stroke="#c8c8c8" stroke-width="5.8"/>
<path d="M1338.5 254 L1344 254 L1357 271 L1351 271 Z" fill="#c8c8c8"/>
</svg>
</body></html>
